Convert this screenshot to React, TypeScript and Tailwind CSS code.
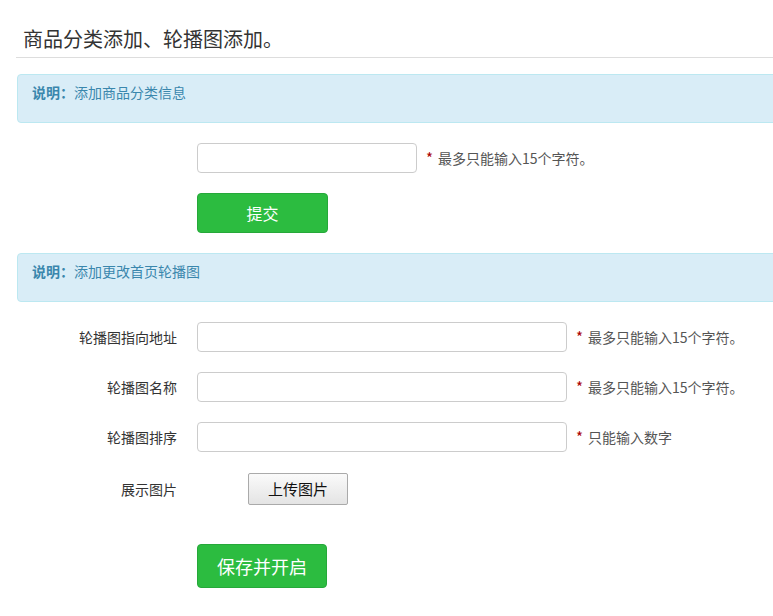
const font = 'font-["Microsoft_YaHei","Noto_Sans_CJK_SC",sans-serif]'

function Alert({ text }: { text: string }) {
  return (
    <div className="-mr-[20px] rounded-[4px] border border-[#bce8f1] bg-[#d9edf7] pl-[14px] pt-[7px] pb-[20px] text-[14px] leading-[20px] text-[#3a87ad]">
      <span className="font-bold">说明：</span>
      {text}
    </div>
  )
}

function Hint({ text }: { text: string }) {
  return (
    <div className="ml-[9px] flex items-center text-[14px] text-[#555]">
      <span className="mr-[5px] text-[15px] text-[#a00]">*</span>
      {text}
    </div>
  )
}

function Row({ label, hint }: { label: string; hint: string }) {
  return (
    <div className="flex items-center">
      <label className="w-[161px] text-right text-[14px] text-[#333]">{label}</label>
      <input className="ml-[20px] h-[30px] w-[370px] rounded-[4px] border border-[#ccc] bg-white px-2 outline-none" />
      <Hint text={hint} />
    </div>
  )
}

export default function App() {
  return (
    <div className={`${font} h-[616px] w-[773px] overflow-hidden bg-white`}>
      <div className="pl-[16px]">
        <h1 className="border-b border-[#ddd] pl-[7px] pt-[25px] pb-[4px] text-[20px] font-normal leading-[28px] text-[#333]">
          商品分类添加、轮播图添加。
        </h1>

        <div className="mt-[16px] ml-[1px]">
          <Alert text="添加商品分类信息" />
        </div>

        <div className="mt-[20px] ml-[181px] flex items-center">
          <input className="h-[30px] w-[220px] rounded-[4px] border border-[#ccc] bg-white px-2 outline-none" />
          <Hint text="最多只能输入15个字符。" />
        </div>

        <button className="mt-[20px] ml-[181px] h-[40px] w-[131px] rounded-[4px] border border-[#26a83a] bg-[#2cbc40] text-[16px] text-white">
          提交
        </button>

        <div className="mt-[20px] ml-[1px]">
          <Alert text="添加更改首页轮播图" />
        </div>

        <div className="mt-[20px] flex flex-col gap-[20px]">
          <Row label="轮播图指向地址" hint="最多只能输入15个字符。" />
          <Row label="轮播图名称" hint="最多只能输入15个字符。" />
          <Row label="轮播图排序" hint="只能输入数字" />
        </div>

        <div className="mt-[21px] flex items-center">
          <label className="w-[161px] text-right text-[14px] text-[#333]">展示图片</label>
          <button className="ml-[71px] h-[32px] w-[100px] rounded-[2px] border border-[#aaa] bg-gradient-to-b from-[#fafafa] to-[#e4e4e4] text-[15px] text-[#111]">
            上传图片
          </button>
        </div>

        <button className="mt-[39px] ml-[181px] h-[44px] w-[130px] rounded-[4px] border border-[#26a83a] bg-[#2cbc40] text-[18px] text-white">
          保存并开启
        </button>
      </div>
    </div>
  )
}
